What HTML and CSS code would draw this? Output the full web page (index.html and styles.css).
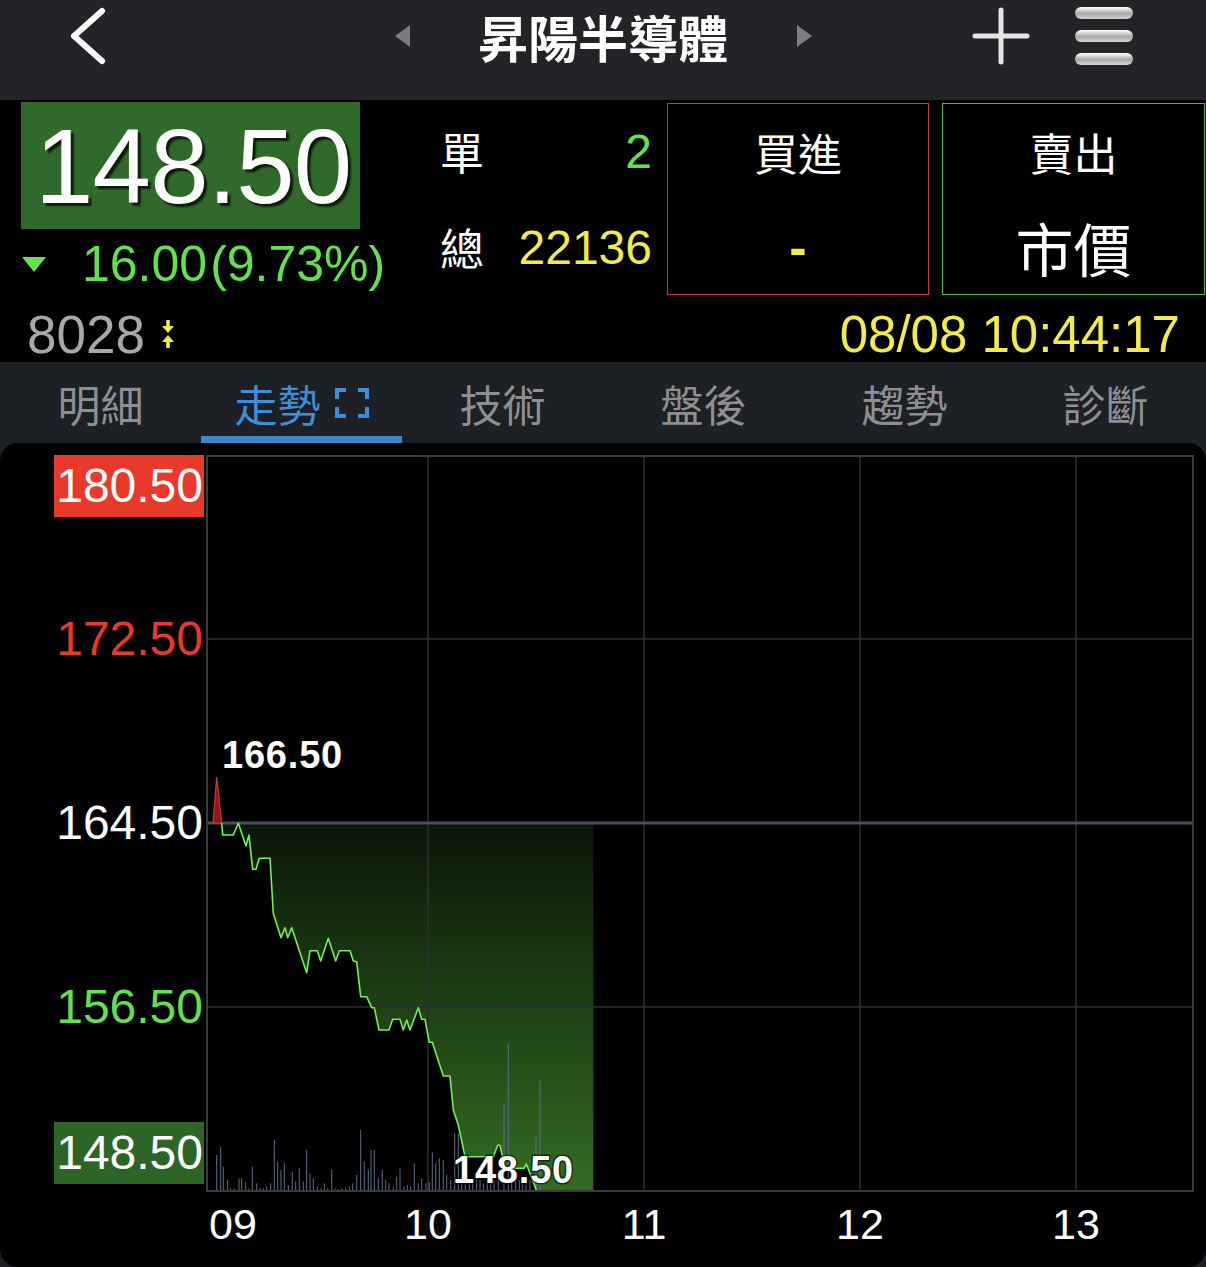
FILE: index.html
```html
<!DOCTYPE html>
<html lang="zh-Hant">
<head>
    <meta charset="UTF-8">
    <meta name="viewport" content="width=device-width, initial-scale=1.0">
    <title>昇陽半導體</title>
    <link rel="stylesheet" href="styles.css">
</head>
<body>
    <!-- Top navigation -->
    <div class="topbar">
        <svg class="back" viewBox="0 0 44 58">
            <polyline points="36,4 8,29 36,54" fill="none" stroke="#fff" stroke-width="6" stroke-linecap="round" stroke-linejoin="round"/>
        </svg>
        <span class="nav-tri nav-tri-left"></span>
        <h1 class="title">昇陽半導體</h1>
        <span class="nav-tri nav-tri-right"></span>
        <svg class="plus" viewBox="0 0 58 58">
            <path d="M29 3V55M3 29H55" stroke="#e6e6e6" stroke-width="5" stroke-linecap="round"/>
        </svg>
        <div class="menu">
            <span></span><span></span><span></span>
        </div>
    </div>

    <!-- Quote header -->
    <div class="quote-head">
        <div class="quote">
            <div class="price-box">148.50</div>
            <div class="change">
                <span class="down-tri"></span>
                <span class="change-text">16.00<span class="pct">(9.73%)</span></span>
            </div>
        </div>
        <div class="stats">
            <div class="stat-row">
                <span class="stat-label">單</span>
                <span class="stat-value green">2</span>
            </div>
            <div class="stat-row">
                <span class="stat-label">總</span>
                <span class="stat-value yellow">22136</span>
            </div>
        </div>
        <div class="order-box buy">
            <div class="order-cell cjk">買進</div>
            <div class="order-cell dash">-</div>
        </div>
        <div class="order-box sell">
            <div class="order-cell cjk">賣出</div>
            <div class="order-cell cjk big">市價</div>
        </div>
    </div>

    <div class="quote-info">
        <div class="code">
            8028
            <svg class="updown" viewBox="0 0 14 28">
                <rect x="5.2" y="0" width="3.6" height="7" fill="#f2ec4a"/>
                <polygon points="1,6 13,6 7,13" fill="#f2ec4a"/>
                <polygon points="1,22 13,22 7,15" fill="#f2ec4a"/>
                <rect x="5.2" y="21" width="3.6" height="7" fill="#f2ec4a"/>
            </svg>
        </div>
        <div class="time">08/08 10:44:17</div>
    </div>

    <!-- Tabs -->
    <div class="tabs">
        <div class="tab">明細</div>
        <div class="tab active">走勢
            <svg class="expand" viewBox="0 0 34 30">
                <path d="M2 11V2H11M23 2H32V11M32 19V28H23M11 28H2V19" fill="none" stroke="#3f8ed8" stroke-width="4"/>
            </svg>
        </div>
        <div class="tab">技術</div>
        <div class="tab">盤後</div>
        <div class="tab">趨勢</div>
        <div class="tab">診斷</div>
    </div>

    <!-- Intraday chart -->
    <div class="chart">
        <div class="y-axis">
            <div class="y-box up">180.50</div>
            <div class="y-label red y-172">172.50</div>
            <div class="y-label y-164">164.50</div>
            <div class="y-label green y-156">156.50</div>
            <div class="y-box down">148.50</div>
        </div>

        <svg class="plot" viewBox="206 455 988 737" width="988" height="737">
            <defs>
                <linearGradient id="fallFill" gradientUnits="userSpaceOnUse" x1="0" y1="823" x2="0" y2="1191">
                    <stop offset="0" stop-color="#0b1608"/>
                    <stop offset="1" stop-color="#346c22"/>
                </linearGradient>
            </defs>

            <polygon fill="url(#fallFill)" points="221.7,823 222.7,835 233.3,835 238.3,823.3 246,846 249,835 252.7,869.3 256,869.3 259.3,858.3 270,858.3 273.3,913.3 281,937.7 285,927.7 287.7,937.7 291.7,927.7 306.7,972.7 310,950.7 317.3,950.7 320.7,961 328.3,938.3 335.7,961 339.3,950.7 350,950.7 353.3,961 356.7,961.7 360.7,996.7 366.7,996.7 371.7,1007.7 374.3,1007.7 379,1030 389,1030 392.7,1019.3 400,1019.3 403.3,1030 406.7,1020 410,1030 418.3,1007.7 421.7,1019.3 425,1019.3 429.3,1042.3 432.3,1042.3 443.3,1076 450,1076 453.3,1110 458.3,1125 465,1156.7 493.3,1156.7 497.7,1145.3 500,1145.3 505,1168.3 524,1168.3 526.3,1164 528,1168.3 536.7,1191 593.3,1191 593.3,823"/>

            <g class="grid">
                <path d="M428 455V1192M644 455V1192M860 455V1192M1076 455V1192M206 639H1194M206 1007H1194"/>
            </g>

            <path class="volume" d="M216.7 1191V1155M220.7 1191V1146.7M223.3 1191V1166.7M227.7 1191V1180M230.7 1191V1188.3M234.3 1191V1188.3M239 1191V1178.3M241.7 1191V1178.3M245.7 1191V1181.7M249 1191V1188.3M252.3 1191V1166.7M256.7 1191V1183.3M260 1191V1188.3M263.3 1191V1188.3M266.7 1191V1186.7M270.7 1191V1183.3M274.3 1191V1140M277.7 1191V1161.7M281 1191V1170M284.3 1191V1163.3M288.3 1191V1185M292.3 1191V1171.7M295.7 1191V1181.7M299.3 1191V1168.3M303.3 1191V1181.7M306.7 1191V1150M310 1191V1173.3M313.3 1191V1178.3M317.3 1191V1186.7M321 1191V1188.3M324.3 1191V1183.3M327.7 1191V1188.3M331.7 1191V1170M335 1191V1188.3M338.3 1191V1189.3M341.7 1191V1188.3M345.7 1191V1188.3M349.3 1191V1186.7M352.7 1191V1183.3M356.7 1191V1175M360.7 1191V1130M364.3 1191V1161.7M368.3 1191V1170M371 1191V1150M374.3 1191V1150M378.3 1191V1178.3M382.3 1191V1170M385.7 1191V1180M389 1191V1183.3M393.3 1191V1186.7M396.7 1191V1176.7M400 1191V1168.3M404 1191V1186.7M407.3 1191V1185M410.7 1191V1186.7M414.3 1191V1163.3M418.3 1191V1183.3M421.7 1191V1178.3M426 1191V1183.3M429.3 1191V1181.7M432.3 1191V1151.7M435.7 1191V1163.3M439.3 1191V1158.3M443.3 1191V1160M446.7 1191V1175M450.7 1191V1180M454.7 1191V1133.3M458.3 1191V1133.3M461.7 1191V1178.3M465.3 1191V1178.3M469.3 1191V1180M472.7 1191V1180M476.7 1191V1176.7M480 1191V1180M483.3 1191V1183.3M487.3 1191V1180M490.7 1191V1176.7M494 1191V1180M498.3 1191V1176.7M504 1191V1103.3M508.3 1191V1043.3M511.7 1191V1180M515.7 1191V1180M519.3 1191V1180M522.7 1191V1180M526 1191V1180M530 1191V1180M536 1191V1136.7M540 1191V1080"/>

            <line class="ref-line" x1="206" y1="823" x2="1194" y2="823"/>

            <polygon class="rise" points="213,823 216.7,777 221.7,823"/>

            <polyline class="price-line" points="221.7,823 222.7,835 233.3,835 238.3,823.3 246,846 249,835 252.7,869.3 256,869.3 259.3,858.3 270,858.3 273.3,913.3 281,937.7 285,927.7 287.7,937.7 291.7,927.7 306.7,972.7 310,950.7 317.3,950.7 320.7,961 328.3,938.3 335.7,961 339.3,950.7 350,950.7 353.3,961 356.7,961.7 360.7,996.7 366.7,996.7 371.7,1007.7 374.3,1007.7 379,1030 389,1030 392.7,1019.3 400,1019.3 403.3,1030 406.7,1020 410,1030 418.3,1007.7 421.7,1019.3 425,1019.3 429.3,1042.3 432.3,1042.3 443.3,1076 450,1076 453.3,1110 458.3,1125 465,1156.7 493.3,1156.7 497.7,1145.3 500,1145.3 505,1168.3 524,1168.3 526.3,1164 528,1168.3 536.7,1191"/>

            <rect class="frame" x="207" y="456" width="986" height="735"/>

            <text class="chart-note" x="222" y="768">166.50</text>
            <text class="chart-note" x="453" y="1183">148.50</text>
        </svg>

        <div></div>
        <div class="x-axis">
            <span class="x-first">09</span>
            <span class="x-tick">10</span>
            <span class="x-tick">11</span>
            <span class="x-tick">12</span>
            <span class="x-tick">13</span>
        </div>
    </div>
</body>
</html>
```

FILE: styles.css
```css
/* Base */
* {
    box-sizing: border-box;
}

body {
    margin: 0;
    width: 1206px;
    height: 1267px;
    overflow: hidden;
    background-color: #1d2024;
    color: #fff;
    font-family: "Liberation Sans", Arial, "Noto Sans CJK TC", sans-serif;
}

.cjk {
    font-family: "Noto Sans CJK TC", sans-serif;
}

.green {
    color: #62e24c;
}

.yellow {
    color: #f2ec4a;
}

.red {
    color: #e8392a;
}

/* Top bar */
.topbar {
    display: flex;
    align-items: center;
    height: 100px;
    padding-bottom: 28px;
    background-color: #232428;
}

.back {
    width: 44px;
    height: 58px;
    margin-left: 66px;
}

.nav-tri {
    width: 0;
    height: 0;
    border-top: 11px solid transparent;
    border-bottom: 11px solid transparent;
}

.nav-tri-left {
    margin-left: 285px;
    border-right: 15px solid #7b7d81;
}

.nav-tri-right {
    margin-left: 69px;
    border-left: 15px solid #7b7d81;
}

.title {
    margin: 0 0 0 68px;
    width: 250px;
    font-family: "Noto Sans CJK TC", sans-serif;
    font-size: 50px;
    font-weight: 700;
    line-height: 60px;
    white-space: nowrap;
}

.plus {
    width: 58px;
    height: 58px;
    margin-left: 160px;
}

.menu {
    display: flex;
    flex-direction: column;
    gap: 11px;
    width: 58px;
    margin-left: 45px;
}

.menu span {
    height: 12px;
    border-radius: 6px;
    background: linear-gradient(#ffffff, #a9a9a9 55%, #d4d4d4);
}

/* Quote header */
.quote-head {
    display: flex;
    align-items: flex-start;
    height: 200px;
    padding-top: 2px;
    background-color: #000;
}

.quote {
    width: 419px;
    margin-left: 21px;
}

.price-box {
    width: 339px;
    height: 127px;
    padding: 3px 0 0 14px;
    background-color: #2f6a2a;
    font-size: 105px;
    line-height: 124px;
    letter-spacing: -0.8px;
    text-shadow: 3px 3px 2px rgba(0, 0, 0, 0.75);
}

.change {
    display: flex;
    align-items: center;
    height: 62px;
    margin-top: 4px;
}

.down-tri {
    width: 0;
    height: 0;
    margin-left: 1px;
    border-left: 12px solid transparent;
    border-right: 12px solid transparent;
    border-top: 15px solid #62e24c;
}

.change-text {
    margin-left: 36px;
    color: #62e24c;
    font-size: 50px;
}

.pct {
    margin-left: 3px;
}

.stats {
    width: 212px;
    padding-top: 1px;
}

.stat-row {
    display: flex;
    justify-content: space-between;
    align-items: center;
    height: 96px;
}

.stat-label {
    font-family: "Noto Sans CJK TC", sans-serif;
    font-size: 44px;
}

.stat-value {
    font-size: 48px;
}

.order-box {
    display: flex;
    flex-direction: column;
    height: 192px;
    margin-top: 1px;
}

.order-box.buy {
    width: 262px;
    margin-left: 15px;
    border: 1.5px solid #c9393b;
}

.order-box.sell {
    width: 263px;
    margin-left: 13px;
    border: 1.5px solid #4bb93c;
}

.order-cell {
    flex: 1;
    display: flex;
    align-items: center;
    justify-content: center;
    font-size: 44px;
}

.order-cell.big {
    font-size: 58px;
}

.order-cell.dash {
    color: #f2ec4a;
    font-size: 52px;
    font-weight: 700;
}

.quote-info {
    display: flex;
    align-items: center;
    justify-content: space-between;
    height: 62px;
    padding: 6px 26px 0 27px;
    background-color: #000;
}

.code {
    display: flex;
    align-items: center;
    color: #a6a8aa;
    font-size: 53px;
}

.updown {
    width: 14px;
    height: 28px;
    margin-left: 16px;
}

.time {
    color: #f2ec4a;
    font-size: 51px;
}

/* Tabs */
.tabs {
    display: grid;
    grid-template-columns: repeat(6, 1fr);
    height: 81px;
    background-color: #1d2024;
}

.tab {
    display: flex;
    align-items: center;
    justify-content: center;
    color: #8d8f93;
    font-family: "Noto Sans CJK TC", sans-serif;
    font-size: 43px;
}

.tab.active {
    color: #3f8ed8;
    box-shadow: inset 0 -7px 0 #3f86c8;
}

.expand {
    width: 34px;
    height: 30px;
    margin-left: 14px;
}

/* Chart */
.chart {
    display: grid;
    grid-template-columns: 206px 988px;
    grid-template-rows: 737px 64px;
    height: 824px;
    padding-top: 12px;
    background-color: #000;
    border-radius: 18px;
}

.y-axis {
    display: flex;
    flex-direction: column;
    align-items: flex-end;
    padding-right: 2px;
    font-size: 48px;
}

.y-box {
    width: 150px;
    height: 62px;
    padding-right: 1px;
    line-height: 62px;
    text-align: right;
}

.y-box.up {
    background-color: #e8392a;
}

.y-box.down {
    margin-top: 90px;
    background-color: #2d6527;
}

.y-label {
    height: 50px;
    line-height: 50px;
    padding-right: 1px;
}

.y-172 {
    margin-top: 97px;
}

.y-164,
.y-156 {
    margin-top: 134px;
}

.plot {
    display: block;
}

.grid path {
    stroke: #2e2f31;
    stroke-width: 1.5;
    fill: none;
}

.volume {
    stroke: #5a6f8c;
    stroke-width: 1;
    fill: none;
}

.ref-line {
    stroke: #46525d;
    stroke-width: 3;
}

.rise {
    fill: #8a1b1b;
    stroke: #d8312c;
    stroke-width: 1.2;
}

.price-line {
    fill: none;
    stroke: #74f153;
    stroke-width: 1.6;
    stroke-linejoin: round;
}

.frame {
    fill: none;
    stroke: #3a3b3d;
    stroke-width: 2;
}

.chart-note {
    fill: #fff;
    font-family: "Liberation Sans", Arial, sans-serif;
    font-size: 38px;
    font-weight: 700;
    letter-spacing: 0.8px;
    stroke: rgba(0, 0, 0, 0.6);
    stroke-width: 3px;
    paint-order: stroke;
}

.x-axis {
    display: flex;
    align-items: center;
    font-size: 43px;
}

.x-first {
    width: 114px;
    padding-left: 3px;
}

.x-tick {
    width: 216px;
    text-align: center;
}
```
